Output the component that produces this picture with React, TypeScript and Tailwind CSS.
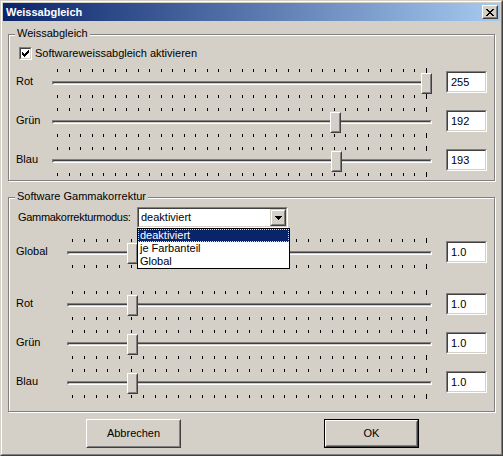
import React from "react";

function Pixels({ rows, color = "#000" }: { rows: string[]; color?: string }) {
  const w = rows[0].length;
  const h = rows.length;
  const rects: React.ReactElement[] = [];
  rows.forEach((r, y) => {
    for (let x = 0; x < r.length; x++) {
      if (r[x] === "X") rects.push(<rect key={`${x}-${y}`} x={x} y={y} width={1} height={1} fill={color} />);
    }
  });
  return (
    <svg width={w} height={h} viewBox={`0 0 ${w} ${h}`} shapeRendering="crispEdges" className="block shrink-0">
      {rects}
    </svg>
  );
}

const CLOSE_X = ["XX....XX", ".XX..XX.", "..XXXX..", "...XX...", "..XXXX..", ".XX..XX.", "XX....XX"];
const CHECK = ["......X", ".....XX", "X...XXX", "XX.XXX.", "XXXXX..", ".XXX...", "..X...."];
const ARROW = ["XXXXXXX", ".XXXXX.", "..XXX..", "...X..."];

function Ticks({ width, count }: { width: number; count: number }) {
  const span = width - 11;
  const xs = Array.from({ length: count }, (_, i) => Math.round(5 + (i * span) / (count - 1)));
  return (
    <svg width={width} height={5} shapeRendering="crispEdges" className="block shrink-0">
      {xs.map((x, i) => (
        <rect key={i} x={x} y={i === count - 1 ? 0 : 1} width={1} height={i === count - 1 ? 5 : 3} fill="#000" />
      ))}
    </svg>
  );
}

function Slider({ width, count, frac, className }: { width: number; count: number; frac: number; className: string }) {
  const left = Math.round(frac * (width - 11));
  return (
    <div className={`relative h-[29px] shrink-0 flex flex-col ${className}`}>
      <div className="-mt-[1px]">
        <Ticks width={width} count={count} />
      </div>
      <div className="mt-[8px] h-[4px] border border-t-[#808080] border-l-[#808080] border-r-white border-b-white">
        <div className="h-full border border-t-[#404040] border-l-[#404040] border-r-[#d4d0c8] border-b-[#d4d0c8]" />
      </div>
      <div className="mt-[9px]">
        <Ticks width={width} count={count} />
      </div>
      <div
        className="absolute top-[4px] w-[11px] h-[21px] border border-t-white border-l-white border-r-[#404040] border-b-[#404040]"
        style={{ left }}
      >
        <div className="h-full w-full border border-t-[#d4d0c8] border-l-[#d4d0c8] border-r-[#808080] border-b-[#808080] bg-[#d4d0c8]" />
      </div>
    </div>
  );
}

function Edit({ value }: { value: string }) {
  return (
    <div className="mt-[2px] w-[41px] h-[22px] border border-t-[#808080] border-l-[#808080] border-r-white border-b-white">
      <div className="h-full w-full border border-t-[#404040] border-l-[#404040] border-r-[#d4d0c8] border-b-[#d4d0c8] bg-white pl-[3px] leading-[18px]">
        {value}
      </div>
    </div>
  );
}

function Row({
  label,
  labelClass,
  sliderClass,
  width,
  count,
  frac,
  value,
}: {
  label: string;
  labelClass: string;
  sliderClass: string;
  width: number;
  count: number;
  frac: number;
  value: string;
}) {
  return (
    <div className="flex h-[29px]">
      <div className={`shrink-0 pl-[7px] pt-[6px] leading-[13px] ${labelClass}`}>{label}</div>
      <Slider width={width} count={count} frac={frac} className={sliderClass} />
      <div className="ml-[14px]">
        <Edit value={value} />
      </div>
    </div>
  );
}

function Group({ title, className, children }: { title: string; className: string; children: React.ReactNode }) {
  return (
    <div className={`relative border border-[#808080] shadow-[inset_1px_1px_0_#fff,1px_1px_0_#fff] ${className}`}>
      <span className="absolute left-[6px] -top-[8px] bg-[#d4d0c8] px-[2px] leading-[13px] whitespace-nowrap">{title}</span>
      {children}
    </div>
  );
}

function Button({ label, isDefault, className }: { label: string; isDefault?: boolean; className: string }) {
  const inner = (
    <div className="h-full w-full border border-t-white border-l-white border-r-[#404040] border-b-[#404040]">
      <div className="h-full w-full border border-t-[#d4d0c8] border-l-[#d4d0c8] border-r-[#808080] border-b-[#808080] flex items-center justify-center leading-[13px]">
        {label}
      </div>
    </div>
  );
  return (
    <div className={`w-[95px] h-[29px] shrink-0 ${isDefault ? "border border-black" : ""} ${className}`}>{inner}</div>
  );
}

export default function App() {
  return (
    <div className="w-[503px] h-[456px] font-['Liberation_Sans',Arial,sans-serif] text-[11px] text-black">
      <div className="w-full h-full border border-t-[#d4d0c8] border-l-[#d4d0c8] border-r-[#404040] border-b-[#404040]">
        <div className="w-full h-full border border-t-white border-l-white border-r-[#808080] border-b-[#808080] bg-[#d4d0c8] p-[1px] flex flex-col">
          {/* Title bar */}
          <div className="h-[18px] shrink-0 flex items-center bg-[linear-gradient(to_right,#0a246a,#a6caf0)] pl-[3px]">
            <span className="font-bold text-white leading-[13px]">Weissabgleich</span>
            <div className="ml-auto mr-[2px] w-[16px] h-[14px] border border-t-white border-l-white border-r-[#404040] border-b-[#404040]">
              <div className="h-full w-full border border-t-[#d4d0c8] border-l-[#d4d0c8] border-r-[#808080] border-b-[#808080] bg-[#d4d0c8] flex items-center justify-center">
                <Pixels rows={CLOSE_X} />
              </div>
            </div>
          </div>

          <div className="px-[5px] pt-[13px] flex flex-col">
            <Group title="Weissabgleich" className="h-[147px]">
              <div className="pt-[12px] flex flex-col">
                <div className="flex items-center h-[13px] pl-[10px]">
                  <div className="w-[13px] h-[13px] border border-t-[#808080] border-l-[#808080] border-r-white border-b-white">
                    <div className="w-full h-full border border-t-[#404040] border-l-[#404040] border-r-[#d4d0c8] border-b-[#d4d0c8] bg-white flex items-center justify-center">
                      <Pixels rows={CHECK} />
                    </div>
                  </div>
                  <span className="ml-[3px] leading-[13px]">Softwareweissabgleich aktivieren</span>
                </div>
                <div className="mt-[9px] flex flex-col gap-[10px]">
                  <Row label="Rot" labelClass="w-[43px]" sliderClass="w-[380px]" width={380} count={33} frac={255 / 255} value="255" />
                  <Row label="Grün" labelClass="w-[43px]" sliderClass="w-[380px]" width={380} count={33} frac={192 / 255} value="192" />
                  <Row label="Blau" labelClass="w-[43px]" sliderClass="w-[380px]" width={380} count={33} frac={193 / 255} value="193" />
                </div>
              </div>
            </Group>

            <Group title="Software Gammakorrektur" className="mt-[16px] h-[215px]">
              <div className="pt-[9px] flex flex-col">
                <div className="flex items-center h-[21px]">
                  <div className="w-[128px] shrink-0 pl-[9px] leading-[13px] tracking-[-0.3px]">Gammakorrekturmodus:</div>
                  <div className="relative w-[151px] h-[21px] border border-t-[#808080] border-l-[#808080] border-r-white border-b-white">
                    <div className="h-full w-full border border-t-[#404040] border-l-[#404040] border-r-[#d4d0c8] border-b-[#d4d0c8] bg-white flex items-center">
                      <span className="pl-[2px] leading-[13px]">deaktiviert</span>
                      <div className="ml-auto w-[16px] h-[17px] border border-t-[#d4d0c8] border-l-[#d4d0c8] border-r-[#404040] border-b-[#404040]">
                        <div className="h-full w-full border border-t-white border-l-white border-r-[#808080] border-b-[#808080] bg-[#d4d0c8] flex items-center justify-center">
                          <Pixels rows={ARROW} />
                        </div>
                      </div>
                    </div>
                    <div className="absolute -left-[1px] top-[20px] z-10 w-[153px] h-[41px] border border-black bg-white flex flex-col">
                      <div className="h-[13px] bg-[#0a246a] text-white border border-dotted border-[#f5db95] leading-[11px] pl-[1px]">
                        deaktiviert
                      </div>
                      <div className="h-[13px] leading-[13px] pl-[2px]">je Farbanteil</div>
                      <div className="h-[13px] leading-[13px] pl-[2px]">Global</div>
                    </div>
                  </div>
                </div>
                <div className="mt-[11px]">
                  <Row label="Global" labelClass="w-[58px]" sliderClass="w-[365px]" width={365} count={31} frac={10 / 59} value="1.0" />
                </div>
                <div className="mt-[23px] flex flex-col gap-[10px]">
                  <Row label="Rot" labelClass="w-[58px]" sliderClass="w-[365px]" width={365} count={31} frac={10 / 59} value="1.0" />
                  <Row label="Grün" labelClass="w-[58px]" sliderClass="w-[365px]" width={365} count={31} frac={10 / 59} value="1.0" />
                  <Row label="Blau" labelClass="w-[58px]" sliderClass="w-[365px]" width={365} count={31} frac={10 / 59} value="1.0" />
                </div>
              </div>
            </Group>

            <div className="mt-[7px] flex h-[29px]">
              <Button label="Abbrechen" className="ml-[78px]" />
              <Button label="OK" isDefault className="ml-[143px]" />
            </div>
          </div>
        </div>
      </div>
    </div>
  );
}
